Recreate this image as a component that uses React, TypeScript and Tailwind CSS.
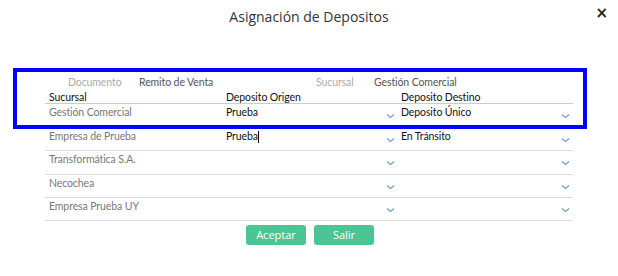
import React from "react";

const Chevron = () => (
  <svg width="9" height="6" viewBox="0 0 9 6" className="shrink-0">
    <path d="M1 1.5 L4.5 4.5 L8 1.5" fill="none" stroke="#6a9ad8" strokeWidth="1.1" />
  </svg>
);

const rows = [
  { suc: "Gestión Comercial", orig: "Prueba", dest: "Deposito Único", h: "h-[24px]" },
  { suc: "Empresa de Prueba", orig: "Prueba", dest: "En Tránsito", caret: true, h: "h-[23px]" },
  { suc: "Transformática S.A.", orig: "", dest: "", h: "h-[24px]" },
  { suc: "Necochea", orig: "", dest: "", h: "h-[23px]" },
  { suc: "Empresa Prueba UY", orig: "", dest: "", h: "h-[23px]" },
];

export default function App() {
  return (
    <div
      className="relative w-[618px] h-[276px] bg-white overflow-hidden tracking-[-0.1px]"
      style={{ fontFamily: 'Lato, "Liberation Sans", sans-serif' }}
    >
      <div className="relative flex h-[32px] items-center justify-center pt-[1px] tracking-normal">
        <span className="text-[14px] text-[#333]" style={{ fontFamily: '"Open Sans", sans-serif' }}>
          Asignación de Depositos
        </span>
        <span className="absolute right-[10px] top-[2px] text-[15px] font-bold text-[#222]" style={{ fontFamily: '"DejaVu Sans", sans-serif' }}>×</span>
      </div>

      <div className="mx-[45px] mt-[42px]">
        <div className="flex h-[17px] items-center text-[10.5px]">
          <span className="ml-[23px] w-[71px] text-[#aaa]">Documento</span>
          <span className="w-[177px] text-[#555]">Remito de Venta</span>
          <span className="w-[58px] text-[#aaa]">Sucursal</span>
          <span className="text-[#555]">Gestión Comercial</span>
        </div>
        <div className="grid grid-cols-[177px_175px_175px] h-[13px] items-end border-b border-[#ccc] text-[10.5px] text-[#111] leading-[13px]">
          <span className="pl-[4px]">Sucursal</span>
          <span className="pl-[4px]">Deposito Origen</span>
          <span className="pl-[4px]">Deposito Destino</span>
        </div>
        {rows.map((r, i) => (
          <div
            key={i}
            className={`grid grid-cols-[177px_175px_175px] ${r.h} border-b border-[#ddd] text-[10.5px] leading-[15px]`}
          >
            <div className="pl-[4px] pt-[1px] text-[#777]">{r.suc}</div>
            <div className="flex justify-between pl-[4px] pr-[2px]">
              <span className="pt-[1px] text-[#111]">
                {r.orig}
                {r.caret && <span className="inline-block w-[1px] h-[12px] bg-black align-middle" />}
              </span>
              <span className="pt-[9px]"><Chevron /></span>
            </div>
            <div className="flex justify-between pl-[4px] pr-[2px]">
              <span className="pt-[1px] text-[#111]">{r.dest}</span>
              <span className="pt-[9px]"><Chevron /></span>
            </div>
          </div>
        ))}
        <div
          className="mt-[4px] flex justify-center gap-[8px] pl-[2px] tracking-normal"
          style={{ fontFamily: '"Open Sans", sans-serif' }}
        >
          <button className="h-[20px] w-[60px] rounded-[3px] bg-[#4cc494] text-[11px] text-white">Aceptar</button>
          <button className="h-[20px] w-[60px] rounded-[3px] bg-[#4cc494] text-[11px] text-white">Salir</button>
        </div>
      </div>

      <div className="absolute left-[13px] top-[68px] w-[574px] h-[61px] border-4 border-[#0000ff]" />
    </div>
  );
}
